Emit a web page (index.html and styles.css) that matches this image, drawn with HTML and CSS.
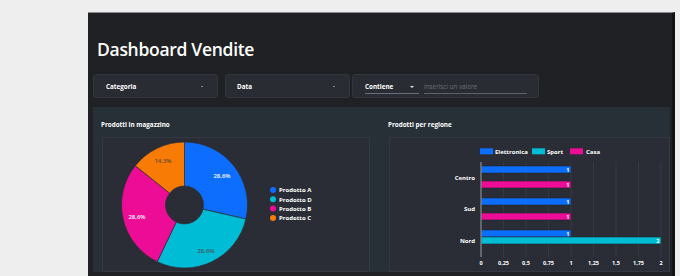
FILE: index.html
```html
<!DOCTYPE html>
<html lang="it">
<head>
<meta charset="utf-8">
<title>Dashboard Vendite</title>
<link rel="stylesheet" href="styles.css">
</head>
<body>
<div class="window">
  <h1 class="title">Dashboard Vendite</h1>
  <div class="filters">
    <div class="filter filter-cat"><span class="flabel">Categoria</span><span class="caret-sm"></span></div>
    <div class="filter filter-data"><span class="flabel">Data</span><span class="caret-sm"></span></div>
    <div class="filter filter-text">
      <div class="op"><span class="flabel">Contiene</span><span class="caret"></span></div>
      <div class="value">Inserisci un valore</div>
    </div>
  </div>
  <section class="charts">
    <div class="card">
      <div class="card-title">Prodotti in magazzino</div>
      <div class="chart-box">
        <svg class="chart" width="268" height="135" viewBox="0 0 268 135">
          <g stroke="#2b2e37" stroke-width="0.7">
            <path fill="#0d6efd" d="M82.5 5 A63 63 0 0 1 143.92 82.02 L101.02 72.23 A19 19 0 0 0 82.5 49 Z"/>
            <path fill="#00bcd4" d="M143.92 82.02 A63 63 0 0 1 55.17 124.76 L74.26 85.12 A19 19 0 0 0 101.02 72.23 Z"/>
            <path fill="#ec0c96" d="M55.17 124.76 A63 63 0 0 1 33.25 28.72 L67.65 56.15 A19 19 0 0 0 74.26 85.12 Z"/>
            <path fill="#f77b05" d="M33.25 28.72 A63 63 0 0 1 82.5 5 L82.5 49 A19 19 0 0 0 67.65 56.15 Z"/>
          </g>
          <g class="pie-lbl" text-anchor="middle">
            <text x="120" y="40.5" fill="#ffffff">28,6%</text>
            <text x="104" y="115.5" fill="#3f5a60">28,6%</text>
            <text x="35" y="81.5" fill="#ffffff">28,6%</text>
            <text x="61" y="25.5" fill="#6a4a32">14,3%</text>
          </g>
          <g class="legend">
            <circle cx="171" cy="53" r="3" fill="#0d6efd"/>
            <text x="177" y="55.3">Prodotto A</text>
            <circle cx="171" cy="62.3" r="3" fill="#00bcd4"/>
            <text x="177" y="64.6">Prodotto D</text>
            <circle cx="171" cy="71.6" r="3" fill="#ec0c96"/>
            <text x="177" y="73.9">Prodotto B</text>
            <circle cx="171" cy="81" r="3" fill="#f77b05"/>
            <text x="177" y="83.3">Prodotto C</text>
          </g>
        </svg>
      </div>
    </div>
    <div class="card">
      <div class="card-title">Prodotti per regione</div>
      <div class="chart-box">
        <svg class="chart" width="281" height="135" viewBox="0 0 281 135">
          <g class="legend">
            <rect x="91" y="11.3" width="13" height="6" fill="#0d6efd"/>
            <text x="106" y="16.8">Elettronica</text>
            <rect x="143" y="11.3" width="13" height="6" fill="#00bcd4"/>
            <text x="158" y="16.8">Sport</text>
            <rect x="181" y="11.3" width="13" height="6" fill="#ec0c96"/>
            <text x="197" y="16.8">Casa</text>
          </g>
          <g stroke="#3a3f48" stroke-width="0.7">
            <line x1="114.5" y1="25" x2="114.5" y2="120"/>
            <line x1="137" y1="25" x2="137" y2="120"/>
            <line x1="159.5" y1="25" x2="159.5" y2="120"/>
            <line x1="182" y1="25" x2="182" y2="120"/>
            <line x1="204.5" y1="25" x2="204.5" y2="120"/>
            <line x1="227" y1="25" x2="227" y2="120"/>
            <line x1="249.5" y1="25" x2="249.5" y2="120"/>
            <line x1="272" y1="25" x2="272" y2="120"/>
          </g>
          <g stroke="#1f2a30" stroke-width="0.6">
            <rect x="92" y="29" width="90" height="7" fill="#0d6efd"/>
            <rect x="92" y="44" width="90" height="7" fill="#ec0c96"/>
            <rect x="92" y="61" width="90" height="7" fill="#0d6efd"/>
            <rect x="92" y="76" width="90" height="7" fill="#ec0c96"/>
            <rect x="92" y="93" width="90" height="7" fill="#0d6efd"/>
            <rect x="92" y="100" width="180" height="7" fill="#00bcd4"/>
          </g>
          <line x1="92" y1="25" x2="92" y2="120" stroke="#8a8d93" stroke-width="1.2"/>
          <g class="bar-val" text-anchor="end">
            <text x="180.5" y="35">1</text>
            <text x="180.5" y="50">1</text>
            <text x="180.5" y="67">1</text>
            <text x="180.5" y="82">1</text>
            <text x="180.5" y="99">1</text>
            <text x="270.5" y="106">2</text>
          </g>
          <g class="cat" text-anchor="end">
            <text x="86" y="43.3">Centro</text>
            <text x="86" y="74.3">Sud</text>
            <text x="86" y="106.3">Nord</text>
          </g>
          <g class="tick" text-anchor="middle">
            <text x="92" y="128">0</text>
            <text x="114.5" y="128">0,25</text>
            <text x="137" y="128">0,5</text>
            <text x="159.5" y="128">0,75</text>
            <text x="182" y="128">1</text>
            <text x="204.5" y="128">1,25</text>
            <text x="227" y="128">1,5</text>
            <text x="249.5" y="128">1,75</text>
            <text x="272" y="128">2</text>
          </g>
        </svg>
      </div>
    </div>
  </section>
</div>
</body>
</html>
```
FILE: styles.css
```css
html, body {
  margin: 0;
  padding: 0;
}
body {
  background: #eeeeee;
  font-family: "Open Sans", "Noto Sans", "DejaVu Sans", sans-serif;
  color: #ffffff;
  overflow: hidden;
  height: 276px;
}
.window {
  margin: 12px 0 0 88px;
  width: 579px;
  height: 263px;
  overflow: hidden;
  padding: 0 0 0 5px;
  background: #202124;
  border-top: 1px solid #8c8c8c;
  border-right: 3px solid #121314;
}
.title {
  margin: 24px 0 0 4px;
  font-size: 17.5px;
  line-height: 24px;
  font-weight: 600;
  color: #ffffff;
  letter-spacing: -0.3px;
}
.filters {
  display: flex;
  margin-top: 13px;
  height: 24px;
}
.filter {
  box-sizing: border-box;
  height: 24px;
  background: #2a2c33;
  border: 1px solid #32353c;
  border-radius: 3px;
  display: flex;
  align-items: center;
}
.filter-cat {
  width: 125px;
  padding: 0 14px 0 12px;
  justify-content: space-between;
  margin-right: 7px;
}
.filter-data {
  width: 125px;
  padding: 0 14px 0 11px;
  justify-content: space-between;
  margin-right: 2px;
}
.filter-text {
  width: 187px;
  padding: 0 0 0 12px;
}
.flabel {
  font-size: 6.3px;
  font-weight: 700;
  color: #ffffff;
}
.caret-sm {
  width: 0;
  height: 0;
  border-left: 1.5px solid transparent;
  border-right: 1.5px solid transparent;
  border-top: 1.5px solid #e6e6e6;
}
.op {
  width: 54px;
  height: 14px;
  box-sizing: border-box;
  border-bottom: 1px solid #6a6e77;
  display: flex;
  align-items: center;
  justify-content: space-between;
  padding-right: 5px;
  margin-top: 2px;
}
.caret {
  width: 0;
  height: 0;
  border-left: 2.5px solid transparent;
  border-right: 2.5px solid transparent;
  border-top: 2.5px solid #e6e6e6;
}
.value {
  margin-left: 5px;
  width: 103px;
  height: 14px;
  box-sizing: border-box;
  border-bottom: 1px solid #5d616a;
  font-size: 6.3px;
  line-height: 14px;
  color: #6c7079;
  margin-top: 2px;
}
.charts {
  margin-top: 9px;
  width: 577px;
  box-sizing: border-box;
  padding: 13px 0 0 9px;
  background: #263036;
  display: grid;
  grid-template-columns: 268px 281px;
  column-gap: 19px;
}
.card-title {
  font-size: 6.3px;
  font-weight: 700;
  line-height: 10px;
  height: 10px;
  margin-left: -1px;
  margin-bottom: 7px;
}
.chart-box {
  box-sizing: border-box;
  height: 135px;
  background: #2a2d36;
  border: 1px solid #333843;
  position: relative;
}
.chart {
  display: block;
  position: absolute;
  left: -1px;
  top: -1px;
}
.chart text {
  font-family: "Open Sans", "Noto Sans", sans-serif;
}
.pie-lbl {
  font-size: 6px;
  font-weight: 600;
}
.legend text {
  font-size: 6px;
  font-weight: 700;
  fill: #ffffff;
}
.bar-val {
  font-size: 5.5px;
  font-weight: 700;
  fill: #ffffff;
}
.cat {
  font-size: 6px;
  font-weight: 700;
  fill: #ffffff;
}
.tick {
  font-size: 5.5px;
  font-weight: 700;
  fill: #ffffff;
}
```
